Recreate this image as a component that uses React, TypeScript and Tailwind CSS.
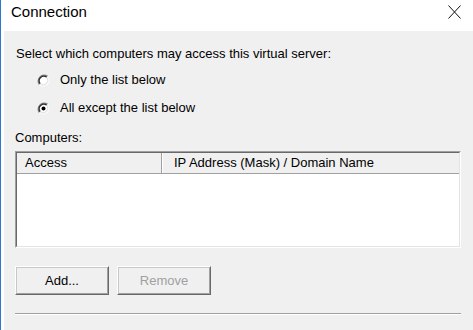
import React from "react";

function Radio({ checked }: { checked?: boolean }) {
  return (
    <svg width="13" height="13" viewBox="0 0 13 13" className="shrink-0">
      <circle cx="6.5" cy="6.5" r="6" fill="#ffffff" />
      <path d="M10.7 2.3 A6 6 0 0 0 2.3 10.7" stroke="#8a8a8a" strokeWidth="1.2" fill="none" />
      <path d="M9.8 3.2 A4.7 4.7 0 0 0 3.2 9.8" stroke="#303030" strokeWidth="1.4" fill="none" />
      <path d="M2.3 10.7 A6 6 0 0 0 10.7 2.3" stroke="#f6f6f6" strokeWidth="1" fill="none" />
      <path d="M3.2 9.8 A4.7 4.7 0 0 0 9.8 3.2" stroke="#dcdcdc" strokeWidth="1" fill="none" />
      {checked && <circle cx="6.5" cy="6.5" r="2" fill="#000" />}
    </svg>
  );
}

function Button({ label, disabled }: { label: string; disabled?: boolean }) {
  return (
    <div className="w-[94px] h-[29px] border-t border-l border-[#ffffff] border-r-[#696969] border-b-[#696969] border-r border-b">
      <div className="w-full h-full border-t border-l border-r border-b border-t-[#c8c8c8] border-l-[#c8c8c8] border-r-[#a0a0a0] border-b-[#a0a0a0] bg-[#f0f0f0] flex items-center justify-center">
        <span className={disabled ? "text-[#a0a0a0]" : "text-black"}>{label}</span>
      </div>
    </div>
  );
}

export default function App() {
  return (
    <div className="w-[473px] h-[330px] flex flex-col bg-white border-l border-[#2b79d0] overflow-hidden font-['Liberation_Sans',Arial,sans-serif] text-[13px] text-black">
      <div className="h-[31px] shrink-0 flex items-start justify-between pl-[10px] pr-[12px]">
        <span className="text-[15px] leading-[18px] mt-[3px] text-black">Connection</span>
        <svg width="13" height="14" viewBox="0 0 13 14" className="mt-[5px]">
          <path d="M0.5 0.5 L12.5 13.5 M12.5 0.5 L0.5 13.5" stroke="#111" strokeWidth="1" fill="none" />
        </svg>
      </div>
      <div className="flex-1 bg-[#f0f0f0] ml-[3px] pl-[11px] pr-[12px] pt-[15px] flex flex-col">
        <div className="h-[16px] leading-[16px] ml-px">Select which computers may access this virtual server:</div>
        <div className="h-[16px] mt-[10px] pl-[22px] flex items-center gap-[10px]">
          <Radio />
          <span className="leading-[16px]">Only the list below</span>
        </div>
        <div className="h-[16px] mt-[12px] pl-[22px] flex items-center gap-[10px]">
          <Radio checked />
          <span className="leading-[16px]">All except the list below</span>
        </div>
        <div className="h-[16px] leading-[16px] mt-[14px]">Computers:</div>
        <div className="mt-[5px] h-[97px] border border-t-[#a0a0a0] border-l-[#a0a0a0] border-r-white border-b-white">
          <div className="w-full h-full border border-t-[#696969] border-l-[#696969] border-r-[#e3e3e3] border-b-[#e3e3e3] bg-white flex flex-col">
            <div className="h-[21px] flex border-b border-[#a0a0a0] bg-[#f0f0f0]">
              <div className="w-[145px] h-full border-r border-[#a0a0a0] pl-[8px] flex items-center">Access</div>
              <div className="flex-1 h-full pl-[11px] flex items-center border-l border-white">IP Address (Mask) / Domain Name</div>
            </div>
          </div>
        </div>
        <div className="mt-[18px] flex gap-[8px]">
          <Button label="Add..." />
          <Button label="Remove" disabled />
        </div>
        <div className="mt-[18px] h-[2px] border-t border-[#a0a0a0] border-b-white border-b" />
      </div>
    </div>
  );
}
